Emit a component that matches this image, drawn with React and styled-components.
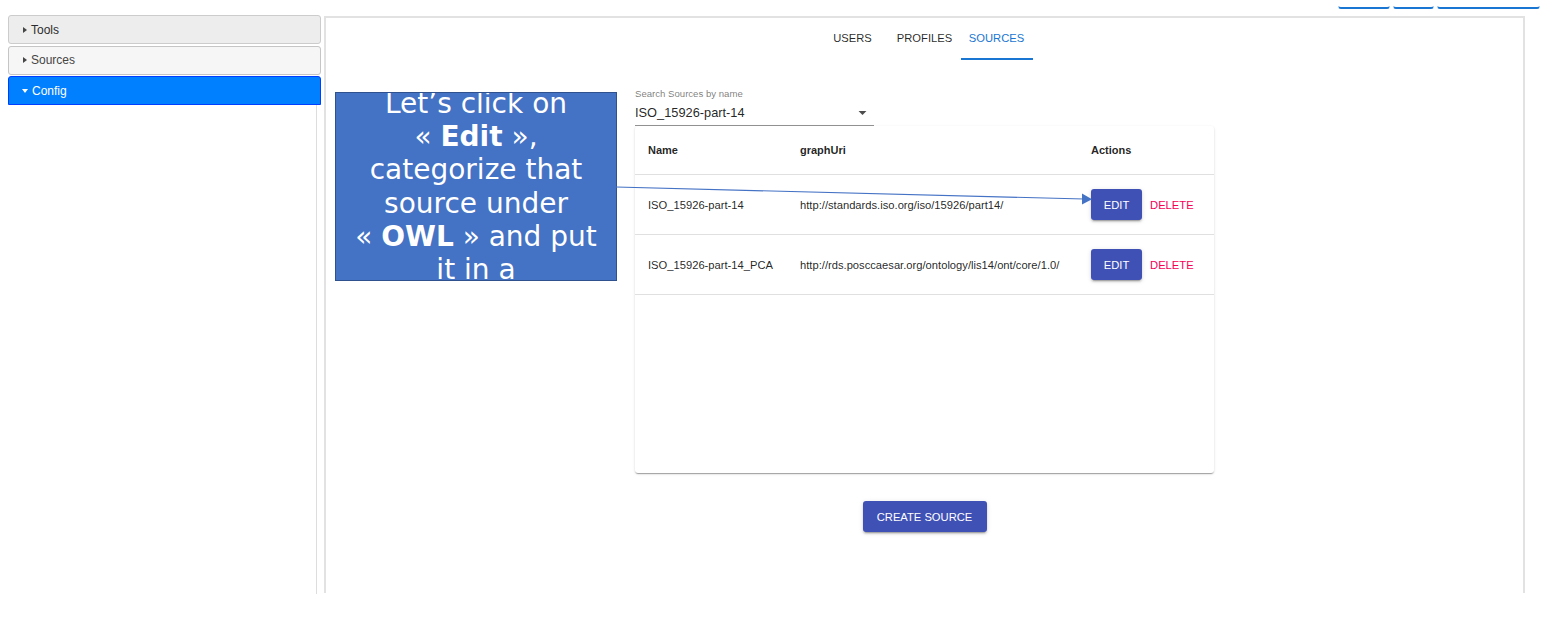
import React from 'react';
import styled, { createGlobalStyle } from 'styled-components';

const GlobalStyle = createGlobalStyle`
  html, body {
    margin: 0;
    padding: 0;
    background: #fff;
  }
  body {
    font-family: 'Liberation Sans', Arial, sans-serif;
    color: rgba(0, 0, 0, 0.87);
  }
`;

const sources = [
  { name: 'ISO_15926-part-14', graphUri: 'http://standards.iso.org/iso/15926/part14/' },
  { name: 'ISO_15926-part-14_PCA', graphUri: 'http://rds.posccaesar.org/ontology/lis14/ont/core/1.0/' },
];

const App = () => {
  return (
    <Page>
      <GlobalStyle />
      {/* toolbar scrolled above the window, only the bottoms show */}
      <TopBar>
        <TopButton width={52} />
        <TopButton width={41} />
        <TopButton width={103} />
      </TopBar>

      <Body>
        {/* accordion on the left */}
        <Sidebar>
          <AccordionHeader variant="hover">
            <Caret />
            Tools
          </AccordionHeader>
          <AccordionHeader>
            <Caret />
            Sources
          </AccordionHeader>
          <AccordionHeader variant="active">
            <Caret open />
            Config
          </AccordionHeader>
          <AccordionContent />
        </Sidebar>

        <MainPanel>
          <Tabs>
            <Tab>Users</Tab>
            <Tab>Profiles</Tab>
            <Tab selected>Sources</Tab>
          </Tabs>

          <Content>
            <SearchField>
              <FieldLabel>Search Sources by name</FieldLabel>
              <SelectRow>
                <span>ISO_15926-part-14</span>
                <svg width="19" height="19" viewBox="0 0 24 24">
                  <path d="M7 10l5 5 5-5z" fill="rgba(0,0,0,0.7)" />
                </svg>
              </SelectRow>
            </SearchField>

            <TableCard>
              <HeadCell>Name</HeadCell>
              <HeadCell>graphUri</HeadCell>
              <HeadCell>Actions</HeadCell>
              {sources.map((s) => (
                <React.Fragment key={s.name}>
                  <Cell>{s.name}</Cell>
                  <Cell>{s.graphUri}</Cell>
                  <Cell>
                    <ContainedButton>Edit</ContainedButton>
                    <TextButton>Delete</TextButton>
                  </Cell>
                </React.Fragment>
              ))}
            </TableCard>

            <CreateButton>Create source</CreateButton>
          </Content>
        </MainPanel>
      </Body>

      {/* annotation overlay */}
      <Callout>
        <CalloutText>
          Let’s click on
          <br />
          «&nbsp;<b>Edit</b>&nbsp;»,
          <br />
          categorize that
          <br />
          source under
          <br />
          «&nbsp;<b>OWL</b>&nbsp;» and put
          <br />
          it in a
        </CalloutText>
      </Callout>
      <ArrowLayer width="1546" height="640" viewBox="0 0 1546 640">
        <line x1="616" y1="187" x2="1084" y2="199" stroke="#4472C4" strokeWidth="1.2" />
        <polygon points="1082,193.5 1092,199.2 1082,204.5" fill="#4472C4" />
      </ArrowLayer>
    </Page>
  );
};

export default App;

const Page = styled.div`
  position: relative;
  width: 1546px;
  height: 640px;
  overflow: hidden;
  background: #fff;
`;

const TopBar = styled.div`
  height: 15px;
  display: flex;
  justify-content: flex-end;
  align-items: flex-start;
  gap: 3px;
  padding-right: 6px;
  box-sizing: border-box;
`;

const TopButton = styled.div`
  width: ${(p) => p.width}px;
  height: 3px;
  margin-top: 6px;
  box-sizing: border-box;
  border: 1px solid rgba(25, 118, 210, 0.35);
  border-top: none;
  border-bottom: 2px solid #1976d2;
  border-radius: 0 0 3px 3px;
`;

const Body = styled.div`
  display: flex;
  align-items: flex-start;
  gap: 3px;
  padding-left: 8px;
`;

const Sidebar = styled.div`
  width: 313px;
  display: flex;
  flex-direction: column;
  gap: 1.6px;
`;

const headerColors = {
  default: { bg: '#f6f6f6', border: '#c5c5c5', color: '#454545' },
  hover: { bg: '#ededed', border: '#cccccc', color: '#2b2b2b' },
  active: { bg: '#007fff', border: '#003eff', color: '#ffffff' },
};

const AccordionHeader = styled.div`
  height: 29px;
  box-sizing: border-box;
  display: flex;
  align-items: center;
  padding-left: 13px;
  font-size: 12px;
  border-radius: 3px;
  background: ${(p) => headerColors[p.variant || 'default'].bg};
  border: 1px solid ${(p) => headerColors[p.variant || 'default'].border};
  color: ${(p) => headerColors[p.variant || 'default'].color};
  ${(p) => p.variant === 'active' && 'border-radius: 3px 3px 0 0;'}
`;

const Caret = styled.span`
  width: 0;
  height: 0;
  margin-right: 4px;
  border-style: solid;
  ${(p) =>
    p.open
      ? 'border-width: 4px 3px 0 3px; border-color: #fff transparent transparent transparent; margin-right: 4px;'
      : 'border-width: 3.5px 0 3.5px 4px; border-color: transparent transparent transparent #454545; margin-left: 1px;'}
`;

const AccordionContent = styled.div`
  height: 489px;
  margin-top: -2px;
  margin-right: 4px;
  border-right: 1px solid #dddddd;
`;

const MainPanel = styled.div`
  width: 1201px;
  height: 577px;
  margin-top: 1px;
  box-sizing: border-box;
  border: 2px solid #e2e2e2;
  border-bottom: none;
  display: flex;
  flex-direction: column;
  align-items: center;
`;

const Tabs = styled.div`
  display: flex;
  height: 42px;
`;

const Tab = styled.div`
  position: relative;
  width: 72px;
  display: flex;
  align-items: center;
  justify-content: center;
  padding-bottom: 2px;
  box-sizing: border-box;
  font-size: 11.2px;
  text-transform: uppercase;
  color: ${(p) => (p.selected ? '#1976d2' : 'rgba(0, 0, 0, 0.85)')};

  &::after {
    content: '';
    position: absolute;
    left: 0;
    right: 0;
    bottom: 0;
    height: 2px;
    background: ${(p) => (p.selected ? '#1976d2' : 'transparent')};
  }
`;

const Content = styled.div`
  width: 579px;
  display: flex;
  flex-direction: column;
`;

const SearchField = styled.div`
  width: 239px;
  margin-top: 28px;
  display: flex;
  flex-direction: column;
`;

const FieldLabel = styled.div`
  font-size: 9.6px;
  line-height: 11px;
  color: rgba(0, 0, 0, 0.54);
`;

const SelectRow = styled.div`
  display: flex;
  align-items: center;
  justify-content: space-between;
  margin-top: 6px;
  height: 15px;
  padding-bottom: 5px;
  font-size: 12.8px;
  border-bottom: 1px solid rgba(0, 0, 0, 0.42);

  svg {
    margin-right: 2px;
  }
`;

const TableCard = styled.div`
  height: 347px;
  display: grid;
  grid-template-columns: 152px 291px 1fr;
  grid-auto-rows: 60px;
  grid-template-rows: 49px;
  align-content: start;
  background: #fff;
  border-radius: 3px;
  box-shadow: 0px 2px 1px -1px rgba(0, 0, 0, 0.2), 0px 1px 1px 0px rgba(0, 0, 0, 0.14),
    0px 1px 3px 0px rgba(0, 0, 0, 0.12);
`;

const Cell = styled.div`
  display: flex;
  align-items: center;
  gap: 8px;
  padding-left: 13px;
  font-size: 11.2px;
  white-space: nowrap;
  border-bottom: 1px solid #e0e0e0;
`;

const HeadCell = styled(Cell)`
  font-weight: bold;
  font-size: 11px;
`;

const ContainedButton = styled.button`
  height: 31px;
  padding: 0 12.8px;
  border: none;
  border-radius: 3px;
  background: #3f51b5;
  color: #fff;
  font-family: inherit;
  font-size: 11.2px;
  text-transform: uppercase;
  box-shadow: 0px 3px 1px -2px rgba(0, 0, 0, 0.2), 0px 2px 2px 0px rgba(0, 0, 0, 0.14),
    0px 1px 5px 0px rgba(0, 0, 0, 0.12);
`;

const TextButton = styled.button`
  padding: 0;
  border: none;
  background: none;
  color: #f50057;
  font-family: inherit;
  font-size: 11.2px;
  text-transform: uppercase;
`;

const CreateButton = styled(ContainedButton)`
  align-self: center;
  margin-top: 28px;
  width: 124px;
  padding: 0;
`;

const Callout = styled.div`
  position: absolute;
  left: 335px;
  top: 92px;
  width: 282px;
  height: 189px;
  box-sizing: border-box;
  background: #4472c4;
  border: 1.5px solid #2f528f;
  overflow: hidden;
  display: flex;
  align-items: center;
  justify-content: center;
`;

const CalloutText = styled.div`
  flex-shrink: 0;
  font-family: 'DejaVu Sans', Verdana, sans-serif;
  font-size: 28px;
  line-height: 33.3px;
  color: #fff;
  text-align: center;
  white-space: nowrap;
`;

const ArrowLayer = styled.svg`
  position: absolute;
  left: 0;
  top: 0;
  pointer-events: none;
`;
